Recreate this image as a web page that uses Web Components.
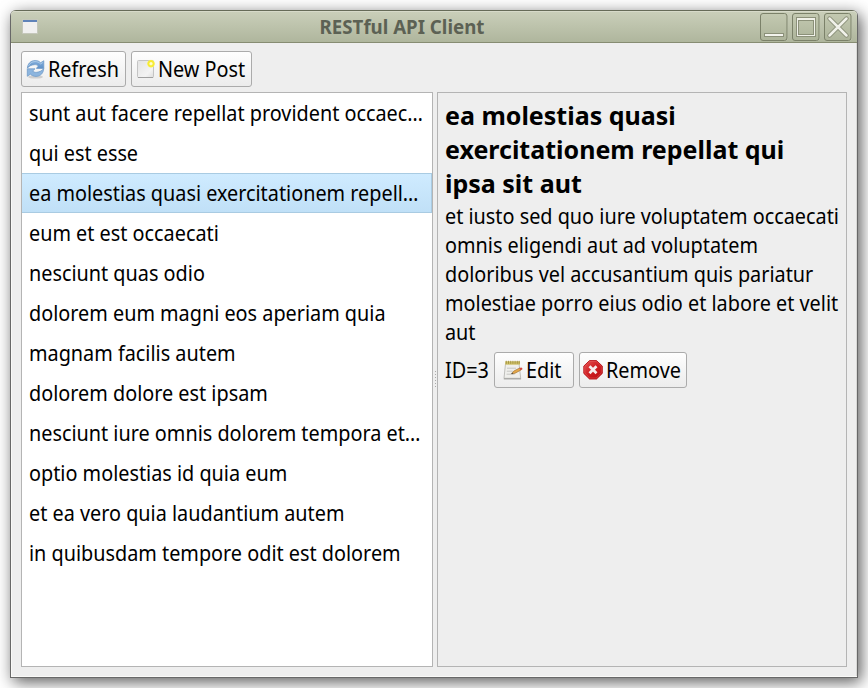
<!DOCTYPE html>
<html lang="en">
<head>
<meta charset="utf-8">
<title>RESTful API Client</title>
<style>
html,body{margin:0;height:100%;overflow:hidden;background:#fff}
body{font-family:"Noto Sans","Open Sans",sans-serif;font-size:21px;color:#000;--narrow:scaleX(.944)}
</style>
</head>
<body>
<app-window caption="RESTful API Client">
  <tool-bar slot="tools">
    <push-button icon="refresh" style="--w:105px">Refresh</push-button>
    <push-button icon="new" style="--w:121px">New Post</push-button>
  </tool-bar>
  <post-list>
    <post-item>sunt aut facere repellat provident occaec…</post-item>
    <post-item>qui est esse</post-item>
    <post-item selected>ea molestias quasi exercitationem repell…</post-item>
    <post-item>eum et est occaecati</post-item>
    <post-item>nesciunt quas odio</post-item>
    <post-item>dolorem eum magni eos aperiam quia</post-item>
    <post-item>magnam facilis autem</post-item>
    <post-item>dolorem dolore est ipsam</post-item>
    <post-item>nesciunt iure omnis dolorem tempora et…</post-item>
    <post-item>optio molestias id quia eum</post-item>
    <post-item>et ea vero quia laudantium autem</post-item>
    <post-item>in quibusdam tempore odit est dolorem</post-item>
  </post-list>
  <split-handle></split-handle>
  <post-detail>
    <span slot="title">ea molestias quasi<br>exercitationem repellat qui<br>ipsa sit aut</span>
    <span slot="body">et iusto sed quo iure voluptatem occaecati<br>omnis eligendi aut ad voluptatem<br>doloribus vel accusantium quis pariatur<br>molestiae porro eius odio et labore et velit<br>aut</span>
    <span slot="id">ID=3</span>
    <push-button slot="actions" icon="edit" style="--w:80px;--pad:8px;--gap:3px">Edit</push-button>
    <push-button slot="actions" icon="remove" style="--w:108px;--pad:3px;--gap:3px">Remove</push-button>
  </post-detail>
</app-window>
<script>
const icons = {
  refresh: `<defs><linearGradient id="b" x1="0" y1="0" x2="0" y2="1"><stop offset="0" stop-color="#86b0dc"/><stop offset="1" stop-color="#5e90c8"/></linearGradient></defs>
    <ellipse cx="9.5" cy="18" rx="7.5" ry="1.6" fill="#000" opacity=".14"/>
    <path d="M1.400 9.200C1.500 4.800 4.700 1.500 9.200 1.500c2.300 0 4 .8 5.400 2.200L17.800 1.700V9.400H10.300l2-2.300C11 5.800 9.600 5.400 8.200 5.700 5.500 6 3 7 1.400 9.200z" fill="url(#b)" stroke="#6a96c6" stroke-width=".7"/>
    <path d="M17.700 9.600C17.500 14.200 14.400 17.400 10 17.400c-2.300 0-4.200-.8-5.600-2.200L1.300 17.300V9.800H9l-2.300 2.300c1.300 1 2.700 1.500 4.100 1.200 2.700-.3 5.300-1.500 6.900-3.700z" fill="#8db5de" stroke="#6a96c6" stroke-width=".7"/>
    <path d="M2.500 7c1.300-2.800 3.500-4.400 6.700-4.400 2.100 0 3.800.7 5.300 2.300l2.200-1.300" fill="none" stroke="#b9d4ee" stroke-width=".8"/>`,
  new: `<defs><linearGradient id="p" x1="0" y1="0" x2="1" y2="1"><stop offset="0" stop-color="#e3e3e3"/><stop offset=".7" stop-color="#f3f3f3"/><stop offset="1" stop-color="#ddd"/></linearGradient><radialGradient id="s"><stop offset="0" stop-color="#fffef0"/><stop offset=".3" stop-color="#fffbb0"/><stop offset=".5" stop-color="#f6e92c"/><stop offset=".78" stop-color="#f8ee3b"/><stop offset="1" stop-color="#f9f27a" stop-opacity=".2"/></radialGradient></defs>
    <rect x="1.500" y="1.500" width="16" height="17" rx="1" fill="url(#p)" stroke="#c4c4c4"/><path d="M2 18.500h15" stroke="#a0a0a0"/><circle cx="15" cy="4.700" r="4.200" fill="url(#s)"/>`,
  edit: `<path d="M2.500 3.500H16l1.700 14.800H1z" fill="#efefec" stroke="#b8b8b4" stroke-width=".9"/><path d="M.8 18.900h17.300" stroke="#9a9a97"/><path d="M2.200 1.300H17v3.400H2.200z" fill="#cfc169"/><path d="M3.300.8v3M5.500.8v3M7.700.8v3M9.900.8v3M12.100.8v3M14.300.8v3M16.200.8v3" stroke="#9c8c3a" stroke-width=".8"/>
    <path d="M4 8.200h9M3.800 11.200h6M3.600 14.200h8" stroke="#c6c6c3"/><path d="m8.700 13.800 2-2.700 6.100-3.200 1.400 2-6.200 3.400z" fill="#e4a748" stroke="#9b6b2c" stroke-width=".6"/><path d="m16.300 8.200 1.700-.8q1.700.2 1.400 1.800l-1.800 1z" fill="#d4483e"/><path d="m8.300 14.100 1.800-.5-1-1z" fill="#333"/>`,
  remove: `<defs><linearGradient id="r" x1="0" y1="0" x2="1" y2="1"><stop offset="0" stop-color="#e65353"/><stop offset=".5" stop-color="#ce1e22"/><stop offset="1" stop-color="#b80e13"/></linearGradient></defs><path d="M6.500.6h7l5.800 5.500v7.300l-5.800 5.600h-7L.8 13.400V6.100z" fill="url(#r)" stroke="#b51116" stroke-width=".9"/><path d="M6.800 1.500h6.400L18.300 6.400v6.500l-5.100 5.100H6.800l-5-5.100V6.400z" fill="none" stroke="#ed7372" stroke-width=".6" opacity=".6"/><path d="m6.500 6.300 7 7m0-7-7 7" stroke="#f5eded" stroke-width="2.700"/>`
};
function define(name, html, init) {
  const t = document.createElement('template');
  t.innerHTML = html;
  customElements.define(name, class extends HTMLElement {
    constructor() { super(); this.attachShadow({mode: 'open'}).append(t.content.cloneNode(true)); }
    connectedCallback() { if (init) init(this, this.shadowRoot); }
  });
}
define('window-button', `<style>
  :host{display:block;width:28px;height:28px}svg{display:block}
  </style><svg width="28" height="28" viewBox="0 0 28 28"><defs><linearGradient id="g" x2="0" y2="1"><stop stop-color="#c3c9b1"/><stop offset="1" stop-color="#adb49a"/></linearGradient></defs><rect x="1.500" y="1.500" width="26" height="26" rx="2.500" fill="none" stroke="#d2d6c4" opacity=".6"/><rect x=".5" y=".5" width="26.500" height="27" rx="2.500" fill="url(#g)" stroke="#7b8169"/><g id="glyph" fill="none"></g></svg>`,
  (el, root) => {
    root.querySelector('#glyph').innerHTML = {
      min: '<rect x="4.500" y="20.500" width="19" height="3" fill="#f2f3ec" stroke="#8b9079"/>',
      max: '<rect x="4.500" y="4.500" width="19" height="19" stroke="#8b9079"/><path d="M5 5h18v18H5zM7 8v13h14V8z" fill="#f0f1e9" fill-rule="evenodd"/><rect x="6.500" y="7.500" width="15" height="14" stroke="#8b9079"/>',
      close: '<path d="m5.500 5.500 17 17m0-17-17 17" stroke="#878c75" stroke-width="4.400" stroke-linecap="round"/><path d="m5.500 5.500 17 17m0-17-17 17" stroke="#f0f1e9" stroke-width="2.500" stroke-linecap="round"/>'
    }[el.getAttribute('kind')];
  });
define('title-bar', `<style>
  :host{display:grid;grid-template-columns:84px 1fr 84px;align-items:center;height:31px;background:linear-gradient(#cacfba,#afb69d);border-bottom:1px solid #868c72;box-shadow:inset 0 1px #d7dac9;border-radius:4px 4px 0 0}
  .app{margin-left:11px;width:16px;height:15px}
  h1{margin:0;text-align:center;font:700 18.700px/30px "Noto Sans",sans-serif;color:#5c6154;white-space:nowrap;transform:translateX(-32px)}
  .buttons{display:flex;gap:4px;align-self:start;padding-top:2px;margin-left:-13px}
  </style><svg class="app" viewBox="0 0 16 15"><rect x=".5" y=".5" width="15" height="14" rx=".6" fill="#f0f0ef" stroke="#c4c7ba"/><path d="M1 1h14v2H1z" fill="#5f83b8"/></svg><h1></h1>
  <div class="buttons"><window-button kind="min"></window-button><window-button kind="max"></window-button><window-button kind="close"></window-button></div>`,
  (el, root) => { root.querySelector('h1').textContent = el.getAttribute('caption'); });
define('app-window', `<style>
  :host{display:block;box-sizing:border-box;height:688px;padding:10px;overflow:hidden}
  .frame{box-sizing:border-box;display:flex;flex-direction:column;width:848px;height:668px;border:1px solid #686868;border-top-color:#666b58;border-radius:6px 6px 0 0;background:#eee;box-shadow:3px 4px 16px rgba(0,0,0,.65)}
  main{flex:1;min-height:0;padding:8px 10px 10px;display:flex;flex-direction:column;gap:5px;box-shadow:inset 1px -1px #f9f9f7,inset -1px 0 #d9d9d7}
  .split{flex:1;min-height:0;display:grid;grid-template-columns:412px 4px 410px}
  </style><div class="frame"><title-bar></title-bar><main><slot name="tools"></slot><div class="split"><slot></slot></div></main></div>`,
  (el, root) => {
    const bar = root.querySelector('title-bar');
    bar.setAttribute('caption', el.getAttribute('caption'));
    bar.shadowRoot.querySelector('h1').textContent = el.getAttribute('caption');
  });
define('tool-bar', `<style>:host{display:flex;gap:5px;height:36px}</style><slot></slot>`);
define('push-button', `<style>
  :host{display:block;flex:none;width:var(--w);height:36px}
  button{box-sizing:border-box;width:100%;height:100%;display:flex;align-items:center;gap:var(--gap,2px);padding:0 0 0 var(--pad,4px);border:1px solid #ababab;border-radius:3px;background:linear-gradient(#fefefe,#ececec);font:inherit;line-height:34px;color:#000;white-space:nowrap}
  svg{width:20px;height:20px;flex:none;margin-top:-1px}
  span{transform:var(--narrow);transform-origin:0 0}
  </style><button><svg viewBox="0 0 20 20"></svg><span><slot></slot></span></button>`,
  (el, root) => { root.querySelector('svg').innerHTML = icons[el.getAttribute('icon')]; });
define('post-list', `<style>:host{display:block;box-sizing:border-box;border:1px solid #b4b4b4;background:#fff}</style><slot></slot>`);
define('post-item', `<style>
  :host{display:block;box-sizing:border-box;height:40px;padding-left:7px;line-height:40px;white-space:nowrap;border:0 solid #a9cbe2}
  :host([selected]){background:linear-gradient(#cfebff,#c0e0f7);border-width:1px 1px 1px 0;line-height:38px}
  span{display:block;width:max-content;transform:var(--narrow);transform-origin:0 0}
  </style><span><slot></slot></span>`);
define('split-handle', `<style>
  :host{display:flex;align-items:center;justify-content:center}
  i{width:1px;height:17px;background:repeating-linear-gradient(#aaa 0 1px,#eee 1px 3px)}
  </style><i></i>`);
define('post-detail', `<style>
  :host{display:block;box-sizing:border-box;border:1px solid #b4b4b4;padding:5px 7px;white-space:nowrap}
  h2{margin:0;font-size:25px;line-height:34px;font-weight:700}
  p{margin:2px 0 0;line-height:29px;width:max-content}
  p,.id{transform:var(--narrow);transform-origin:0 0}
  .id{width:44px}
  .row{display:flex;align-items:center;gap:5px;margin-top:5px}
  </style><h2><slot name="title"></slot></h2><p><slot name="body"></slot></p><div class="row"><div class="id"><slot name="id"></slot></div><slot name="actions"></slot></div>`);
</script>
</body>
</html>
